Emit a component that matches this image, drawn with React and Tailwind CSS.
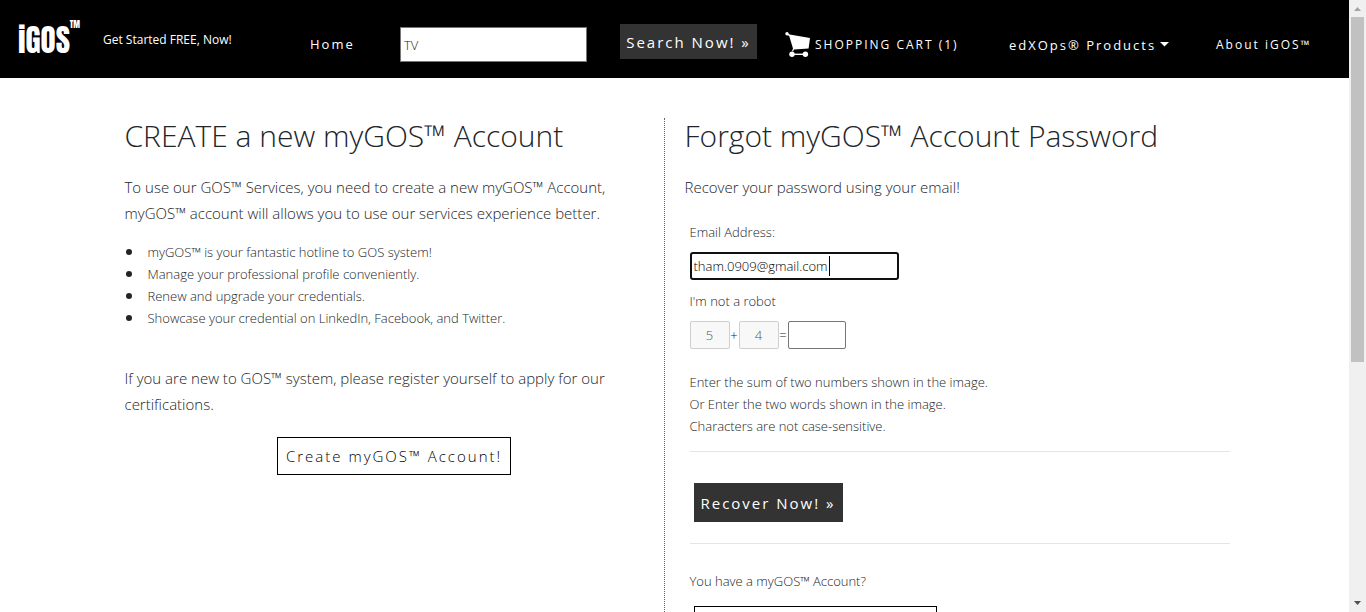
import React from "react";

const perks = [
  "myGOS™ is your fantastic hotline to GOS system!",
  "Manage your professional profile conveniently.",
  "Renew and upgrade your credentials.",
  "Showcase your credential on LinkedIn, Facebook, and Twitter.",
];

function CartIcon() {
  return (
    <svg className="h-[25px] w-[26px] shrink-0" viewBox="0 0 26 25" fill="white" aria-hidden="true">
      <circle cx="2" cy="1.8" r="1.7" />
      <path d="M2 1.2 L4.8 2.6 L25 6 L23.6 16.6 L9 17.4 L8 19.4 L7 19 L8 16.6 L4.2 4 L1.4 2.6 Z" />
      <path d="M7 21.6 H21 V23 H7 Z" />
      <circle cx="7" cy="22.2" r="2.7" />
      <circle cx="20.4" cy="22.2" r="2.7" />
    </svg>
  );
}

function Header() {
  return (
    <header className="grid h-[78px] shrink-0 grid-cols-[85fr_207fr_90fr_220fr_165fr_224fr_207fr_133fr] bg-black pl-[18px] text-[13px] leading-5 whitespace-nowrap text-white">
      <a href="#home" aria-label="iGOS" className="flex w-[62px] flex-col self-start pt-5 font-['Impact','Anton','Roboto_Condensed','Open_Sans_Condensed',sans-serif] font-normal">
        <span className="self-end text-[9px] leading-2">TM</span>
        <span className="text-[31px] leading-6">iGOS</span>
      </a>
      <a href="#start" className="pt-8 text-xs font-normal">Get Started FREE, Now!</a>
      <nav className="contents" aria-label="Main">
        <a href="#home" className="pt-[34px] font-normal tracking-[2px]">Home</a>
        <div className="pt-[27px]">
          <input aria-label="Search" type="text" defaultValue="TV" className="h-[35px] w-[187px] border border-[#767676] bg-white px-[3px] text-[13px] font-light text-[#222]" />
        </div>
        <div className="pt-6">
          <button type="button" className="h-[35px] w-[137px] bg-[#333] text-[15px] font-normal tracking-[2px]">Search Now! »</button>
        </div>
        <a href="#cart" className="flex items-start gap-1 pt-8 text-xs font-normal tracking-[2px]">
          <CartIcon />
          <span className="pt-[3px] leading-5">SHOPPING CART (1)</span>
        </a>
        <button type="button" className="flex items-start pt-[35px] font-normal tracking-[2px]">
          edXOps® Products
          <svg className="mt-[7px] ml-1 h-[5px] w-[9px]" viewBox="0 0 9 5" fill="white" aria-hidden="true"><path d="M0 0H9L4.5 4.6Z" /></svg>
        </button>
        <a href="#about" className="pt-[35px] text-xs leading-5 font-normal tracking-[2px]">About iGOS™</a>
      </nav>
    </header>
  );
}

function CreatePanel() {
  return (
    <section className="w-[560px] shrink-0 border-r border-dotted border-[#666] pr-10 pl-5">
      <h1 className="text-[30px] leading-9">CREATE a new myGOS™ Account</h1>
      <p className="mt-5 text-[15px] leading-[26px]">
        To use our GOS™ Services, you need to create a new myGOS™ Account, myGOS™ account will allows you to use our services experience better.
      </p>
      <ul className="mt-[15px] text-[13px] leading-[22px]">
        {perks.map((perk) => (
          <li key={perk} className="flex items-center gap-4">
            <span className="ml-px size-1.5 rounded-full bg-[#212529]" />
            {perk}
          </li>
        ))}
      </ul>
      <p className="mt-9 text-[15px] leading-[26px]">
        If you are new to GOS™ system, please register yourself to apply for our certifications.
      </p>
      <div className="mt-5 flex justify-center pl-10">
        <button type="button" className="h-[38px] w-[234px] border border-black bg-white text-[15px] tracking-[2px] text-black">Create myGOS™ Account!</button>
      </div>
    </section>
  );
}

function RecoverPanel() {
  return (
    <section className="min-w-0 flex-1 pr-[15px] pl-5">
      <h1 className="text-[30px] leading-9">Forgot myGOS™ Account Password</h1>
      <p className="mt-5 text-[15px] leading-[26px]">Recover your password using your email!</p>
      <form className="mt-[21px] pl-[5px] text-[13px] leading-[22px]">
        <label htmlFor="email" className="block">Email Address:</label>
        <div className="relative mt-[9px] h-7">
          <input id="email" type="email" defaultValue="tham.0909@gmail.com" className="h-7 w-[209px] rounded-[3px] border-2 border-[#101010] bg-white px-0.5 text-black outline-none" />
          <span className="absolute top-1 left-[139px] h-5 w-px bg-black" />
        </div>
        <label htmlFor="sum" className="mt-2.5 block">I'm not a robot</label>
        <div className="mt-[9px] flex h-7 items-center">
          <input aria-label="First number" disabled defaultValue="5" className="h-7 w-10 rounded-[2px] border border-[#cfcfcf] bg-[#f8f8f8] text-center text-[#545454]" />
          <span className="w-[9px] text-center">+</span>
          <input aria-label="Second number" disabled defaultValue="4" className="h-7 w-10 rounded-[2px] border border-[#cfcfcf] bg-[#f8f8f8] text-center text-[#545454]" />
          <span className="w-[9px] text-center">=</span>
          <input id="sum" type="text" className="h-7 w-[58px] rounded-[2px] border border-[#767676] bg-white px-0.5" />
        </div>
        <p className="mt-[22px]">
          Enter the sum of two numbers shown in the image.<br />
          Or Enter the two words shown in the image.<br />
          Characters are not case-sensitive.
        </p>
        <hr className="mt-3.5 border-[#e5e5e5]" />
        <button type="submit" className="mt-[31px] ml-1 block h-[39px] w-[149px] bg-[#333] text-[15px] font-normal tracking-[2px] text-white">Recover Now! »</button>
        <hr className="mt-[21px] border-[#e5e5e5]" />
        <p className="mt-[26px]">You have a myGOS™ Account?</p>
        <button type="button" aria-label="Sign in" className="mt-3.5 ml-1 block h-[38px] w-[243px] border border-black bg-white" />
      </form>
    </section>
  );
}

function ScrollBar() {
  return (
    <div className="flex w-[17px] shrink-0 flex-col items-center bg-[#f0f0f0]" aria-hidden="true">
      <svg className="h-[17px] w-[17px] shrink-0" viewBox="0 0 17 17" fill="#a3a3a3"><path d="M5 11H12L8.5 7Z" /></svg>
      <div className="h-[345px] w-[13px] shrink-0 bg-[#c1c1c1]" />
      <svg className="mt-auto h-[17px] w-[17px] shrink-0" viewBox="0 0 17 17" fill="#505050"><path d="M5 6H12L8.5 10Z" /></svg>
    </div>
  );
}

export default function App() {
  return (
    <div className="flex h-screen overflow-hidden bg-white font-['Open_Sans','Noto_Sans',sans-serif] font-light text-[#212529]">
      <div className="min-w-0 flex-1 overflow-hidden">
        <Header />
        <main className="mx-auto flex max-w-[1140px] pt-10">
          <CreatePanel />
          <RecoverPanel />
        </main>
      </div>
      <ScrollBar />
    </div>
  );
}
